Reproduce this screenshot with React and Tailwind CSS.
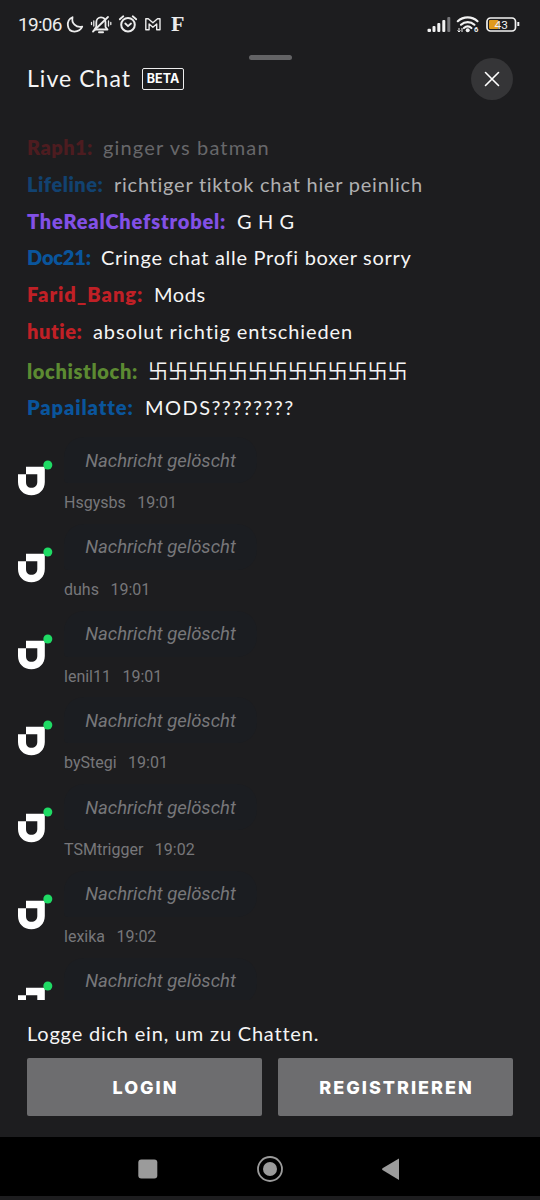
import React from "react";

const messages = [
  { name: "Raph1:", text: "ginger vs batman", color: "text-[#4d1c20]", textColor: "text-[#67676a]", nameWidth: "w-[76px]", nameTracking: "tracking-[0.45px]", tracking: "tracking-[1.15px]" },
  { name: "Lifeline:", text: "richtiger tiktok chat hier peinlich", color: "text-[#124270]", textColor: "text-[#b0b0b1]", nameWidth: "w-[87px]", nameTracking: "tracking-[0.5px]", tracking: "tracking-[0.75px]" },
  { name: "TheRealChefstrobel:", text: "G H G", color: "text-[#8250e6]", textColor: "text-[#f5f5f5]", nameWidth: "w-[210px]", nameTracking: "tracking-[0.83px]", tracking: "tracking-[0.6px]" },
  { name: "Doc21:", text: "Cringe chat alle Profi boxer sorry", color: "text-[#0a559c]", textColor: "text-[#f5f5f5]", nameWidth: "w-[74px]", nameTracking: "tracking-[-0.2px]", tracking: "tracking-[0.72px]" },
  { name: "Farid_Bang:", text: "Mods", color: "text-[#c02026]", textColor: "text-[#f5f5f5]", nameWidth: "w-[127px]", nameTracking: "tracking-[1px]", tracking: "tracking-[0.6px]" },
  { name: "hutie:", text: "absolut richtig entschieden", color: "text-[#c02026]", textColor: "text-[#f5f5f5]", nameWidth: "w-[66px]", nameTracking: "tracking-[0.6px]", tracking: "tracking-[0.9px]" },
  { name: "lochistloch:", text: "卐卐卐卐卐卐卐卐卐卐卐卐卐", color: "text-[#5c8a32]", textColor: "text-[#f5f5f5]", nameWidth: "w-[121px]", nameTracking: "tracking-[0.65px]", tracking: "tracking-[-0.05px]", tall: true },
  { name: "Papailatte:", text: "MODS????????", color: "text-[#0a559c]", textColor: "text-[#f5f5f5]", nameWidth: "w-[118px]", nameTracking: "tracking-[0.9px]", tracking: "tracking-[1.45px]" },
];

const deleted = [
  { user: "Hsgysbs", time: "19:01" },
  { user: "duhs", time: "19:01" },
  { user: "lenil11", time: "19:01" },
  { user: "byStegi", time: "19:01" },
  { user: "TSMtrigger", time: "19:02" },
  { user: "lexika", time: "19:02" },
  { user: "", time: "" },
];

function StatusBar() {
  return (
    <div className="flex h-12 items-center justify-between pl-[18px] pr-[20px] font-['Roboto',sans-serif] text-[#ececec]">
      <div className="flex items-center">
        <span className="w-[47px] pt-px text-[19px] leading-none tracking-[-0.7px]">19:06</span>
        <svg width="124" height="24" viewBox="65 12 124 24" fill="none" stroke="currentColor" strokeWidth="1.8" strokeLinecap="round" strokeLinejoin="round">
          {/* Moon */}
          <path d="M72.5 17.2c-6.8 3-6.2 14.2 2 14.4 3.6 0 6.4-1.9 7.7-4.9-6.2 1.4-11-3.6-9.7-9.5z" />
          {/* Muted bell */}
          <path d="M94.500 29.500h13l-2-2.500v-4.500c0-3-1.700-5.200-4.500-5.200s-4.700 2.200-4.700 5v4.500z" />
          <path d="M93 31.500L108 17" />
          <path d="M99 32.200h4" strokeWidth="2" />
          <path d="M93.800 21v5M91.500 22.500v2M108.500 21v5M110.800 22.500v2" strokeWidth="1.3" />
          {/* Alarm */}
          <circle cx="128" cy="24.700" r="6.800" strokeWidth="2" />
          <path d="M119.800 19.300l3.500-3M136.200 19.300l-3.500-3M125.300 23.500l2.700 2.700 3-2.700" />
          {/* Mail */}
          <path d="M145.800 29.700v-11h2.500l4.600 4 4.600-4h2.500v11h-3.300v-5.700l-3.800 3.300-3.800-3.300v5.700z" strokeWidth="1.4" />
        </svg>
        <span className="-ml-[18px] font-['Liberation_Serif',serif] text-[22px] font-bold leading-none">F</span>
      </div>
      <svg width="93" height="24" viewBox="427 12 93 24" fill="none">
        <g fill="#f2f2f2">
          <rect x="427.5" y="28.800" width="3.500" height="3.200" rx="1" />
          <rect x="432.5" y="26" width="3" height="6" rx="1" />
          <rect x="437.3" y="23" width="3" height="9" rx="1" />
          <rect x="442.3" y="20" width="3" height="12" rx="1" />
          <rect x="447.3" y="17" width="3" height="15" rx="1" fill="#77777a" />
        </g>
        <g stroke="#f2f2f2" strokeWidth="2.2" strokeLinecap="round">
          <path d="M457.800 21.200c5.500-5.200 14.200-5.200 19.700 0M461 24.700c3.800-3.500 9.600-3.500 13.400 0M464 28c2.200-2 5.200-2 7.400 0" />
        </g>
        <circle cx="467.7" cy="30.300" r="2" fill="#f2f2f2" />
        <path d="M459 28v4M457.500 30.500l1.500 1.500 1.500-1.500M462 32v-4" stroke="#f2f2f2" strokeWidth="1" />
        <text x="474" y="32.300" fill="#f2f2f2" fontSize="7.5" fontWeight="700">6</text>
        <rect x="487" y="18" width="28.500" height="13" rx="3.5" stroke="#f2f2f2" strokeWidth="1.7" />
        <rect x="489" y="20" width="9.500" height="9" rx="1" fill="#e09a1d" />
        <path d="M518.300 22v4" stroke="#f2f2f2" strokeWidth="2" />
        <text x="494.5" y="28.800" fill="#f2f2f2" fontSize="11.8">43</text>
      </svg>
    </div>
  );
}

function Header() {
  return (
    <header className="flex h-[81px] shrink-0 flex-col items-center">
      <div className="mt-[7px] h-[5px] w-[43px] shrink-0 rounded-full bg-[#636365]" />
      <div className="-mt-[2px] flex h-[42px] w-full shrink-0 items-center px-[27px]">
        <h1 className="-mt-px w-[116px] whitespace-nowrap text-[23px] leading-none tracking-[1.05px] text-[#f5f5f5]">Live Chat</h1>
        <span className="-ml-px flex h-[22px] w-[42px] items-center justify-center rounded-[2px] border border-[#ededed] font-['Inter',sans-serif] text-[12.5px] font-bold leading-none text-white">
          BETA
        </span>
        <button className="ml-auto flex size-[42px] items-center justify-center rounded-full bg-[#353537]" aria-label="Close">
          <svg width="16" height="16" viewBox="0 0 16 16" stroke="white" strokeWidth="1.6" strokeLinecap="round">
            <path d="M1.500 1.500l13 13M14.500 1.500l-13 13" />
          </svg>
        </button>
      </div>
    </header>
  );
}

function ChatMessage({ message }) {
  const { name, text, color, textColor, nameWidth, nameTracking, tracking, tall } = message;
  return (
    <div className={`flex items-center whitespace-nowrap pl-[27px] text-[20px] leading-none ${tall ? "h-[40px] pt-[3px]" : "h-[36.7px]"}`}>
      <span className={`shrink-0 font-extrabold ${nameWidth} ${nameTracking} ${color}`}>{name}</span>
      <span className={`${tracking} ${textColor}`}>{text}</span>
    </div>
  );
}

function Avatar() {
  return (
    <svg className="mt-[22px] shrink-0" width="46" height="38" viewBox="18 459 46 38">
      <path fillRule="evenodd" fill="white" d="M26 466.700h18.800V482c0 8-5.700 13.200-13.400 13.200S18 490 18 482v-7.800h8V482c0 3.800 2 5.800 5.400 5.800s5.900-2 5.900-5.800v-7.700H26z" />
      <circle cx="47.8" cy="465" r="4.500" fill="#1fdb64" />
    </svg>
  );
}

function DeletedMessage({ user, time }) {
  return (
    <div className="flex h-[86.75px] shrink-0 pl-[18px] font-['Roboto',sans-serif] text-[#77777a]">
      <Avatar />
      <div>
        <div className="flex h-[46px] w-[193px] items-center justify-center rounded-[20px] rounded-bl-[4px] bg-[#1b1d21] pt-[3px] text-[18.5px] italic">
          Nachricht gelöscht
        </div>
        <div className="mt-[10px] flex gap-[11.5px] text-[16px] leading-5">
          <span>{user}</span>
          <span>{time}</span>
        </div>
      </div>
    </div>
  );
}

function LoginPanel() {
  return (
    <div className="h-[137px] shrink-0 px-[27px] pt-[20px]">
      <p className="whitespace-nowrap text-[20px] leading-[26px] tracking-[0.8px] text-[#f5f5f5]">Logge dich ein, um zu Chatten.</p>
      <div className="mt-[12px] flex gap-4 font-['Inter',sans-serif] text-[18px] font-extrabold tracking-[2px] text-white">
        <button className="h-[58px] flex-1 rounded-[2px] bg-[#6d6d6f] pl-[2px]">LOGIN</button>
        <button className="h-[58px] flex-1 rounded-[2px] bg-[#6d6d6f] pl-[2px]">REGISTRIEREN</button>
      </div>
    </div>
  );
}

function NavBar() {
  return (
    <nav className="flex h-[59px] shrink-0 items-center justify-center bg-black pt-[4px]">
      <svg width="264" height="28" viewBox="138 1154 264 28" fill="#9b9b9b">
        <rect x="138.3" y="1158.500" width="19" height="19" rx="3" />
        <circle cx="270" cy="1168" r="12" fill="none" stroke="#9b9b9b" strokeWidth="1.8" />
        <circle cx="270" cy="1168" r="7" />
        <path d="M399 1157.500v21.500l-16.500-9.900q-1-.9 0-1.800z" />
      </svg>
    </nav>
  );
}

export default function App() {
  return (
    <div className="flex h-[1200px] w-[540px] flex-col overflow-hidden bg-[#1d1d1f] font-['Lato','Noto_Sans_CJK_JP',sans-serif]">
      <StatusBar />
      <Header />
      <main className="h-[871px] shrink-0 overflow-hidden">
        <div className="h-[308px]">
          {messages.map((message) => (
            <ChatMessage key={message.name} message={message} />
          ))}
        </div>
        <div className="flex flex-col">
          {deleted.map((item, index) => (
            <DeletedMessage key={index} user={item.user} time={item.time} />
          ))}
        </div>
      </main>
      <LoginPanel />
      <NavBar />
    </div>
  );
}
